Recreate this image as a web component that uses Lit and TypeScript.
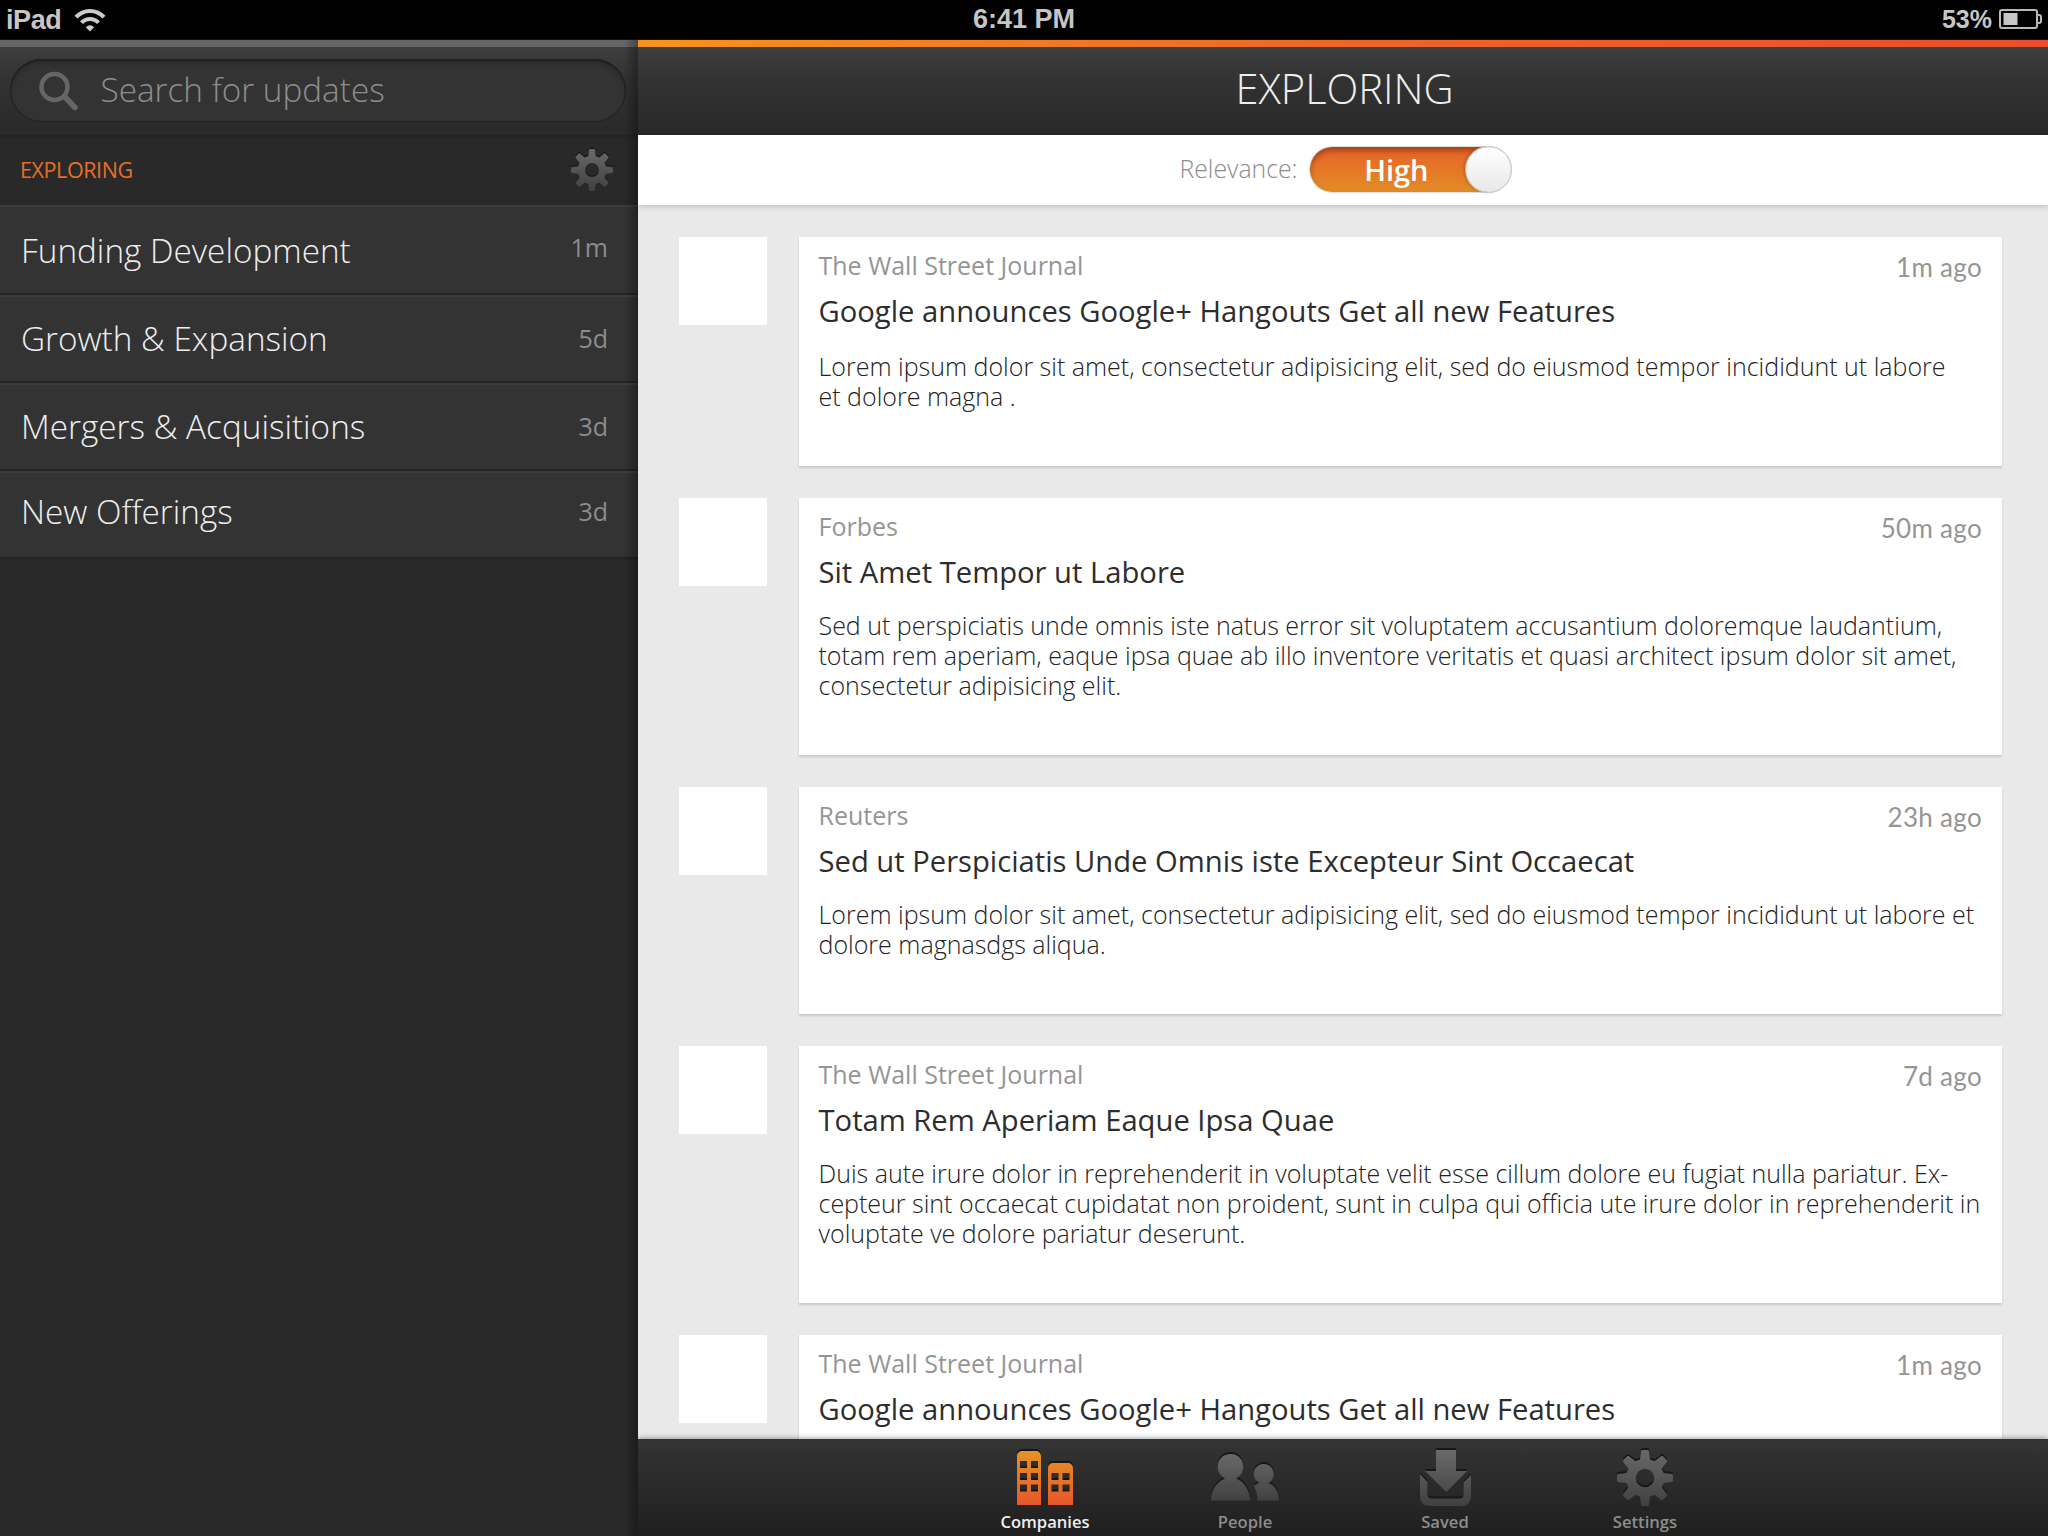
import { LitElement, html, svg, css } from "lit";
import { customElement, property } from "lit/decorators.js";

interface Story { source: string; title: string; lines: string[]; age: string; height: number; gap: number; }

const TOPICS = [
  { name: "Funding Development", age: "1m" },
  { name: "Growth & Expansion", age: "5d" },
  { name: "Mergers & Acquisitions", age: "3d" },
  { name: "New Offerings", age: "3d" },
];

const STORIES: Story[] = [
  { source: "The Wall Street Journal", title: "Google announces Google+ Hangouts Get all new Features",
    lines: ["Lorem ipsum dolor sit amet, consectetur adipisicing elit, sed do eiusmod tempor incididunt ut labore", "et dolore magna ."], age: "1m ago", height: 229, gap: 13 },
  { source: "Forbes", title: "Sit Amet Tempor ut Labore",
    lines: ["Sed ut perspiciatis unde omnis iste natus error sit voluptatem accusantium doloremque laudantium,", "totam rem aperiam, eaque ipsa quae ab illo inventore veritatis et quasi architect ipsum dolor sit amet,", "consectetur adipisicing elit."], age: "50m ago", height: 257, gap: 11 },
  { source: "Reuters", title: "Sed ut Perspiciatis Unde Omnis iste Excepteur Sint Occaecat",
    lines: ["Lorem ipsum dolor sit amet, consectetur adipisicing elit, sed do eiusmod tempor incididunt ut labore et", "dolore magnasdgs aliqua."], age: "23h ago", height: 227, gap: 11 },
  { source: "The Wall Street Journal", title: "Totam Rem Aperiam Eaque Ipsa Quae",
    lines: ["Duis aute irure dolor in reprehenderit in voluptate velit esse cillum dolore eu fugiat nulla pariatur. Ex-", "cepteur sint occaecat cupidatat non proident, sunt in culpa qui officia ute irure dolor in reprehenderit in", "voluptate ve dolore pariatur deserunt."], age: "7d ago", height: 257, gap: 11 },
  { source: "The Wall Street Journal", title: "Google announces Google+ Hangouts Get all new Features",
    lines: [], age: "1m ago", height: 229, gap: 11 },
];

const gearPath = (() => {
  const pts: string[] = [];
  for (let i = 0; i < 8; i++) {
    const a = (i * Math.PI) / 4;
    const p = (x: number, y: number) =>
      (28 + x * Math.cos(a) - y * Math.sin(a)).toFixed(2) + " " + (28 + x * Math.sin(a) + y * Math.cos(a)).toFixed(2);
    pts.push(p(-5, -18.6), p(-4, -27), p(-3, -28), p(3, -28), p(4, -27), p(5, -18.6));
  }
  return "M" + pts.join("L") + "ZM28 18.8a9.2 9.2 0 1 0 0 18.4a9.2 9.2 0 1 0 0-18.4Z";
})();

const SHAPES: Record<string, unknown> = {
  gear: svg`<path fill-rule="evenodd" d=${gearPath} />`,
  companies: svg`<path fill-rule="evenodd" d="M0 54V5a5 5 0 0 1 5-5H19a5 5 0 0 1 5 5V54ZM3 10v7h7v-7ZM14 10v7h7v-7ZM3 22v7h7v-7ZM14 22v7h7v-7ZM3 33.500v7h7v-7ZM14 33.500v7h7v-7ZM31 54V17a5 5 0 0 1 5-5H51a5 5 0 0 1 5 5V54ZM34.500 22v7h7v-7ZM45.500 22v7h7v-7ZM34.500 33.500v7h7v-7ZM45.500 33.500v7h7v-7Z"/>`,
  people: svg`<path d="M19.500 0C27 0 32.300 5.500 32.300 12.500C32.300 18 29.500 22 25 24.500C33 27.500 39 36 39 46.500H0C0 36 6 27.500 14 24.500C9.500 22 6.700 18 6.700 12.500C6.700 5.500 12 0 19.500 0ZM52.700 10C58.500 10 62.700 14.500 62.700 19.800C62.700 24.200 60.500 27.300 57.500 29C64 31 68 38 68 46.500H46.500C46.200 41 45.200 36 43 32C44.600 30.400 46.300 29.300 48.500 28.700C45 27 42.700 24 42.700 19.800C42.700 14.500 47 10 52.700 10Z"/>`,
  saved: svg`<path d="M16 0H36V21H47L26.300 42L5 21H16ZM0 24L7.500 32V44.500Q7.500 48.500 11.500 48.500H39.500Q43.500 48.500 43.500 44.500V32.500L51 25V46Q51 56 41 56H10Q0 56 0 46Z"/>`,
};

@customElement("app-icon")
export class AppIcon extends LitElement {
  @property() name = "gear";
  @property({ type: Number }) w = 56;
  @property({ type: Number }) h = 56;
  @property({ type: Number }) size = 0;
  @property({ type: Boolean }) active = false;
  static styles = css`:host { display: block; flex: none; line-height: 0; } svg { display: block; overflow: visible; } .under { fill: #171717; }`;
  render() {
    const from = this.active ? "#e49426" : "#696969";
    const to = this.active ? "#e8562c" : "#404040";
    return html`<svg width=${this.size || this.w} height=${this.size || this.h} viewBox="0 0 ${this.w} ${this.h}">
      <defs><linearGradient id="g" gradientUnits="userSpaceOnUse" x1="0" y1="0" x2="0" y2=${this.h}>
        <stop offset="0" stop-color=${from} /><stop offset="1" stop-color=${to} /></linearGradient></defs>
      <g class="under" transform="translate(0 -2)">${SHAPES[this.name]}</g>
      <g fill="url(#g)">${SHAPES[this.name]}</g>
    </svg>`;
  }
}

@customElement("status-bar")
export class StatusBar extends LitElement {
  static styles = css`
    :host { display: grid; grid-template-columns: 1fr auto 1fr; height: 39px; background: #000; border-bottom: 1px solid #141414;
      font: bold 27px/38px "Liberation Sans", Arial, sans-serif; color: #c6c6c6; }
    .left { display: flex; align-items: center; padding: 0 0 1px 6px; gap: 13px; }
    .carrier { letter-spacing: -0.4px; }
    .right { display: flex; align-items: center; justify-content: flex-end; gap: 7px; padding: 0 6px 2px 0; font-size: 25px; }
    svg { display: block; }
  `;
  render() {
    return html`
      <div class="left"><span class="carrier">iPad</span>
        <svg width="32" height="24" viewBox="0 0 32 24" fill="none" stroke="#cbcbcb" stroke-width="4">
          <path d="M2 9.200C9.500 .8 22.500 .8 30 9.200" /><path d="M7.500 14.800C12 9.600 20 9.600 24.500 14.800" />
          <path d="M16 23.500L11.800 19.200Q16 15.500 20.200 19.200Z" fill="#cbcbcb" stroke="none" />
        </svg></div>
      <div>6:41 PM</div>
      <div class="right"><span>53%</span>
        <svg width="43" height="20" viewBox="0 0 43 20">
          <rect x="1" y="1" width="37" height="18" rx="2" fill="none" stroke="#b8b8b8" stroke-width="2" />
          <rect x="4.500" y="4" width="14" height="12" fill="#c6c6c6" />
          <path d="M38 6H40Q42 6 42 8V12Q42 14 40 14H38" fill="none" stroke="#b8b8b8" stroke-width="2" />
        </svg></div>`;
  }
}

@customElement("side-panel")
export class SidePanel extends LitElement {
  static styles = css`
    :host { display: block; position: relative; background: #292929; overflow: hidden; }
    :host::after { content: ""; position: absolute; inset: 0 0 0 auto; width: 14px; background: linear-gradient(90deg, transparent, rgba(0,0,0,.32)); }
    .accent { height: 7px; background: #666; }
    .searchbar { height: 88px; box-sizing: border-box; padding: 12px 12px 13px 10px; background: linear-gradient(#3e3e3e, #333 35%, #292929); }
    .search { display: flex; align-items: center; height: 63px; box-sizing: border-box; border-radius: 32px; background: #333;
      box-shadow: inset 0 0 0 1px #202020, inset 0 2px 1px #202020, inset 0 4px 6px rgba(0,0,0,.18);
      padding: 0 0 0 29px; gap: 21.500px; color: #8e8e8e; font-size: 33.300px; font-weight: 300; line-height: 58px; }
    .search span { padding-bottom: 4px; }
    .heading { display: flex; justify-content: space-between; align-items: center; height: 70px; box-sizing: border-box;
      padding: 0 25px 0 20px; color: #e86e25; font-size: 21.500px; letter-spacing: -0.4px; background: linear-gradient(#222, #292929 5px); }
    .heading span { padding-bottom: 2px; }
    .topic { display: flex; justify-content: space-between; height: 88px; box-sizing: border-box; padding: 0 30px 0 21px; background: #333;
      border-top: 2px solid #3e3e3e; border-bottom: 2px solid #242424; color: #eee; font-size: 33.300px; font-weight: 300; line-height: 82px; }
    .topics { box-shadow: 0 1px 2px #202020; }
    .topics .topic:first-child { height: 90px; line-height: 86px; }
    .topics .topic:last-child { height: 86px; border-bottom: 0; line-height: 77px; }
    .age { color: #8c8c8c; font-size: 25px; font-weight: 400; }
    .topics .topic:first-child .age { line-height: 80px; }
  `;
  render() {
    return html`
      <div class="accent"></div>
      <div class="searchbar"><div class="search">
        <svg width="40" height="40" viewBox="0 0 40 40" fill="none" stroke="#666" stroke-linecap="round">
          <circle cx="15.500" cy="16" r="13" stroke-width="4.500" /><path d="M26 26L36 36.500" stroke-width="5.500" /></svg>
        <span>Search for updates</span></div></div>
      <div class="heading"><span>EXPLORING</span><app-icon name="gear" size="42"></app-icon></div>
      <div class="topics">${TOPICS.map((t) => html`<div class="topic"><span>${t.name}</span><span class="age">${t.age}</span></div>`)}</div>`;
  }
}

@customElement("story-row")
export class StoryRow extends LitElement {
  @property({ attribute: false }) story!: Story;
  static styles = css`
    :host { display: grid; grid-template-columns: 88px 1203px; column-gap: 32px; align-items: start; }
    .thumb { height: 88px; background: #fff; }
    .card { box-sizing: border-box; background: #fff; padding: 11px 20px 0 19.500px; box-shadow: 0 2px 2px rgba(0,0,0,.14); }
    .meta { display: flex; justify-content: space-between; height: 38px; line-height: 34px; font-size: 25px; color: #959595; }
    .age { font-family: Lato, "Open Sans", sans-serif; font-size: 26px; line-height: 38px; letter-spacing: .3px; }
    .title { height: 52px; line-height: 50px; font-size: 29.200px; color: #2d2d2d; }
    .body { font-size: 25px; line-height: 30px; font-weight: 300; color: #222; white-space: nowrap; }
  `;
  render() {
    const s = this.story;
    return html`<div class="thumb"></div>
      <div class="card" style="height:${s.height}px">
        <div class="meta"><span>${s.source}</span><span class="age">${s.age}</span></div>
        <div class="title">${s.title}</div>
        <div class="body" style="margin-top:${s.gap}px">${s.lines.map((l) => html`<div>${l}</div>`)}</div>
      </div>`;
  }
}

@customElement("tab-bar")
export class TabBar extends LitElement {
  static styles = css`
    :host { display: flex; justify-content: center; height: 97px; box-sizing: border-box; padding-left: 4px; position: relative;
      background: linear-gradient(#343434, #1f1f1f); box-shadow: 0 -1px 5px rgba(0,0,0,.35); }
    .tab { width: 200px; display: grid; grid-template-rows: 67px 30px; justify-items: center; align-items: end; color: #8d8d8d;
      font-size: 16.600px; font-weight: 600; line-height: 28px; }
    .tab.on { color: #eee; }
    .companies { margin-bottom: 1px; }
    .people { margin-bottom: 5px; }
  `;
  render() {
    return html`
      <div class="tab on"><app-icon class="companies" name="companies" w="56" h="54" active></app-icon><span>Companies</span></div>
      <div class="tab"><app-icon class="people" name="people" w="68" h="47"></app-icon><span>People</span></div>
      <div class="tab"><app-icon name="saved" w="51" h="56"></app-icon><span>Saved</span></div>
      <div class="tab"><app-icon name="gear"></app-icon><span>Settings</span></div>`;
  }
}

@customElement("app-root")
export class AppRoot extends LitElement {
  static styles = css`
    :host { display: grid; grid-template-rows: 40px 1496px; width: 2048px; height: 1536px; overflow: hidden; font-family: "Open Sans", sans-serif; }
    .columns { display: grid; grid-template-columns: 638px 1410px; }
    main { display: grid; grid-template-rows: 7px 88px 70px 1fr 97px; min-height: 0; background: #e9e9e9; overflow: hidden; }
    .accent { background: linear-gradient(90deg, #f7931e, #ec6628 50%, #e84e2c); }
    .header { display: flex; align-items: center; justify-content: center; background: linear-gradient(#3e3e3e, #333 35%, #292929);
      color: #eee; font-size: 41.600px; font-weight: 300; line-height: 83px; padding: 0 0 5px 3px; box-sizing: border-box; }
    .filter { display: flex; align-items: center; justify-content: center; gap: 12px; background: #fff; color: #8c8c8c; font-size: 24.800px; font-weight: 300;
      padding: 0 0 1px 4px; position: relative; box-shadow: 0 1px 6px rgba(0,0,0,.22); line-height: 44px; }
    .filter > span { padding-bottom: 3px; }
    .switch { display: flex; align-items: center; justify-content: flex-end; width: 201px; height: 45px; box-sizing: border-box; border-radius: 23px;
      background: linear-gradient(#e86129, #e28d26); box-shadow: inset 0 4px 5px rgba(90,30,10,.45), 0 0 0 1px #ddd; color: #fff; font-size: 29px; font-weight: 600; gap: 37px; }
    .knob { width: 45px; height: 45px; border-radius: 50%; background: linear-gradient(#fff, #e8e8e8); box-shadow: 0 0 0 1px #ccc, -2px 0 3px rgba(80,40,0,.4); }
    .feed { display: flex; flex-direction: column; gap: 32px; padding: 32px 46px 0 41px; overflow: hidden; min-height: 0; }
    .feed > * { flex: none; }
  `;
  render() {
    return html`<status-bar></status-bar>
      <div class="columns"><side-panel></side-panel>
        <main><div class="accent"></div><div class="header">EXPLORING</div>
          <div class="filter"><span>Relevance:</span><div class="switch"><span>High</span><div class="knob"></div></div></div>
          <div class="feed">${STORIES.map((s) => html`<story-row .story=${s}></story-row>`)}</div>
          <tab-bar></tab-bar></main></div>`;
  }
}
